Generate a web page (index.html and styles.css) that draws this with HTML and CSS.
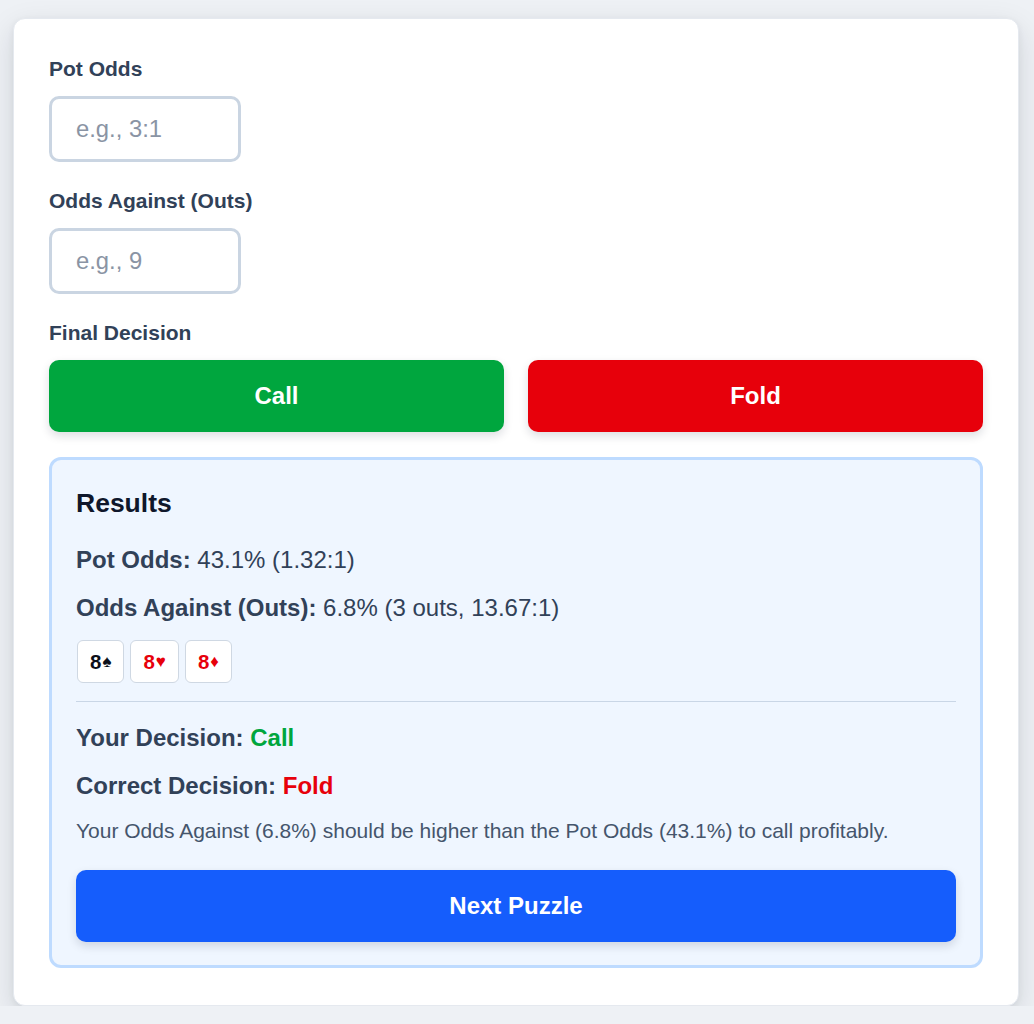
FILE: index.html
```html
<!DOCTYPE html>
<html lang="en">
<head>
<meta charset="utf-8">
<title>Pot Odds Trainer</title>
<link rel="stylesheet" href="styles.css">
</head>
<body>
  <main class="card">
    <div class="field">
      <label class="label" for="pot">Pot Odds</label>
      <input class="input" id="pot" type="text" placeholder="e.g., 3:1">
    </div>
    <div class="field">
      <label class="label" for="outs">Odds Against (Outs)</label>
      <input class="input" id="outs" type="text" placeholder="e.g., 9">
    </div>
    <div class="field field-last">
      <div class="label">Final Decision</div>
      <div class="decisions">
        <button class="btn btn-call">Call</button>
        <button class="btn btn-fold">Fold</button>
      </div>
    </div>

    <section class="results">
      <h3 class="results-title">Results</h3>
      <p class="line line-pot"><strong>Pot Odds:</strong> 43.1% (1.32:1)</p>
      <p class="line line-outs"><strong>Odds Against (Outs):</strong> 6.8% (3 outs, 13.67:1)</p>
      <div class="chips">
        <span class="chip chip-black">8<span class="suit">♠</span></span>
        <span class="chip chip-red">8<span class="suit">♥</span></span>
        <span class="chip chip-red">8<span class="suit">♦</span></span>
      </div>
      <hr class="divider">
      <p class="line line-your"><strong>Your Decision:</strong> <strong class="green">Call</strong></p>
      <p class="line line-correct"><strong>Correct Decision:</strong> <strong class="red">Fold</strong></p>
      <p class="explain">Your Odds Against (6.8%) should be higher than the Pot Odds (43.1%) to call profitably.</p>
      <button class="btn btn-next">Next Puzzle</button>
    </section>
  </main>
</body>
</html>
```

FILE: styles.css
```css
* { box-sizing: border-box; }

html, body {
  margin: 0;
  padding: 0;
}

body {
  background: #eef1f5;
  font-family: "Liberation Sans", Arial, Helvetica, sans-serif;
  color: #314158;
  padding: 18px 15px 0 13px;
}

.card {
  background: #ffffff;
  border: 1px solid #e5e9ef;
  border-radius: 12px;
  box-shadow: 0 10px 30px rgba(15, 23, 42, 0.13), 0 2px 6px rgba(15, 23, 42, 0.06);
  padding: 38px 35px 37px;
  display: flex;
  flex-direction: column;
}

.field {
  display: flex;
  flex-direction: column;
  align-items: flex-start;
  gap: 15px;
  margin-bottom: 27px;
}

.field-last {
  align-items: stretch;
  margin-bottom: 25px;
}

.label {
  font-size: 21px;
  line-height: 24px;
  font-weight: 700;
  color: #314158;
}

.input {
  width: 192px;
  height: 66px;
  border: 3px solid #cad5e2;
  border-radius: 10px;
  padding: 0 24px;
  font-family: "Liberation Sans", Arial, sans-serif;
  font-size: 23.8px;
  color: #314158;
  background: #ffffff;
  outline: none;
}

.input::placeholder {
  color: #8a94a4;
}

.decisions {
  display: grid;
  grid-template-columns: 1fr 1fr;
  gap: 24px;
}

.btn {
  height: 72px;
  border: none;
  border-radius: 10px;
  color: #ffffff;
  font-family: "Liberation Sans", Arial, sans-serif;
  font-size: 24px;
  font-weight: 700;
  display: flex;
  align-items: center;
  justify-content: center;
  box-shadow: 0 4px 10px rgba(15, 23, 42, 0.14);
  cursor: pointer;
}

.btn-call { background: #00a63e; }
.btn-fold { background: #e7000b; }
.btn-next { background: #155dfc; width: 100%; margin-top: 26px; }

.results {
  background: #eff6ff;
  border: 3px solid #bedbff;
  border-radius: 12px;
  padding: 27px 24px 23px;
  display: flex;
  flex-direction: column;
}

.results-title {
  margin: 0;
  font-size: 26.5px;
  line-height: 32px;
  font-weight: 700;
  color: #0f172b;
}

.line {
  margin: 0;
  font-size: 24px;
  line-height: 28px;
  color: #314158;
}

.line strong { font-weight: 700; }

.line-pot { margin-top: 27px; }
.line-outs { margin-top: 20px; }
.line-your { margin-top: 22px; }
.line-correct { margin-top: 20px; }

.chips {
  display: flex;
  gap: 6px;
  margin-top: 18px;
  padding-left: 1px;
}

.chip {
  height: 43px;
  padding: 0 12px;
  display: flex;
  align-items: center;
  background: #ffffff;
  border: 1px solid #cfd8e3;
  border-radius: 6px;
  font-size: 20.5px;
  font-weight: 700;
}

.suit {
  font-size: 17px;
  margin-left: 1px;
}

.chip-black { color: #0b0f19; }
.chip-red { color: #e7000b; }

.divider {
  margin: 18px 0 0;
  border: none;
  border-top: 1px solid #c9d6e6;
  height: 0;
}

.green { color: #00a63e; }
.red { color: #e7000b; }

.explain {
  margin: 18px 0 0;
  font-size: 21px;
  line-height: 26px;
  color: #45556c;
}
```
